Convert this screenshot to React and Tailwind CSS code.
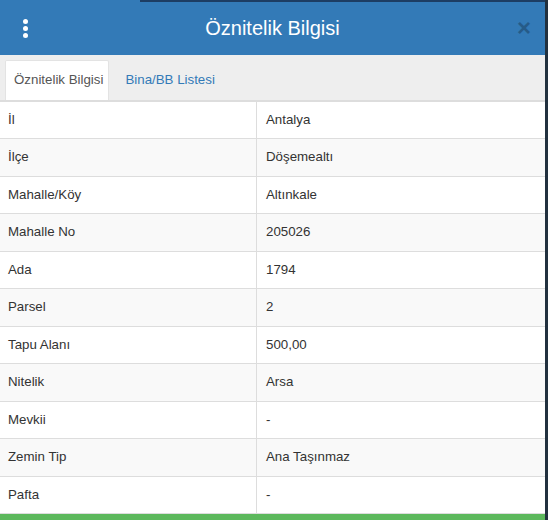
import React from 'react'

const rows = [
  ['İl', 'Antalya'],
  ['İlçe', 'Döşemealtı'],
  ['Mahalle/Köy', 'Altınkale'],
  ['Mahalle No', '205026'],
  ['Ada', '1794'],
  ['Parsel', '2'],
  ['Tapu Alanı', '500,00'],
  ['Nitelik', 'Arsa'],
  ['Mevkii', '-'],
  ['Zemin Tip', 'Ana Taşınmaz'],
  ['Pafta', '-'],
]

export default function App() {
  return (
    <div className="w-[548px] h-[520px] bg-[#22313f] flex overflow-hidden font-[Arial,Liberation_Sans,sans-serif] text-[13.3px] text-[#333]">
      <div className="w-[545px] h-full flex flex-col bg-white">
        {/* Header */}
        <div className="flex h-[2px]">
          <div className="w-[140px] bg-[#337ab7]"></div>
          <div className="flex-1 bg-[#1d3d63]"></div>
        </div>
        <div className="h-[53px] bg-[#337ab7] flex items-center">
          <div className="w-[50px] flex flex-col items-center gap-[2px] pt-[1px]">
            <span className="w-[5px] h-[5px] rounded-full bg-white"></span>
            <span className="w-[5px] h-[5px] rounded-full bg-white"></span>
            <span className="w-[5px] h-[5px] rounded-full bg-white"></span>
          </div>
          <div className="flex-1 text-center text-white text-[20px] leading-none">Öznitelik Bilgisi</div>
          <div className="w-[50px] flex justify-center pl-[8px]">
            <span className="text-[24px] font-bold leading-none text-black opacity-25">×</span>
          </div>
        </div>

        {/* Tabs */}
        <div className="h-[47px] bg-[#eeeeee] border-b-2 border-[#dddddd] flex items-end pl-[5px]">
          <div className="h-[40px] pl-[8px] pr-[5px] bg-white flex items-center text-[#555] rounded-t-[2px] border border-b-0 border-[#e3e3e3]">
            Öznitelik Bilgisi
          </div>
          <div className="h-[40px] pl-[16px] flex items-center text-[#337ab7]">Bina/BB Listesi</div>
        </div>

        {/* Table */}
        <div className="flex flex-col">
          {rows.map(([k, v], i) => (
            <div
              key={k}
              className={`flex h-[37.5px] border-b border-[#dddddd] ${i % 2 === 1 ? 'bg-[#f9f9f9]' : 'bg-white'}`}
            >
              <div className="w-[257px] pl-[8px] flex items-center border-r border-[#dddddd]">{k}</div>
              <div className="flex-1 pl-[9px] flex items-center">{v}</div>
            </div>
          ))}
        </div>
        <div className="flex-1"></div>
        <div className="h-[6px] bg-[#5cb85c]"></div>
      </div>
    </div>
  )
}
